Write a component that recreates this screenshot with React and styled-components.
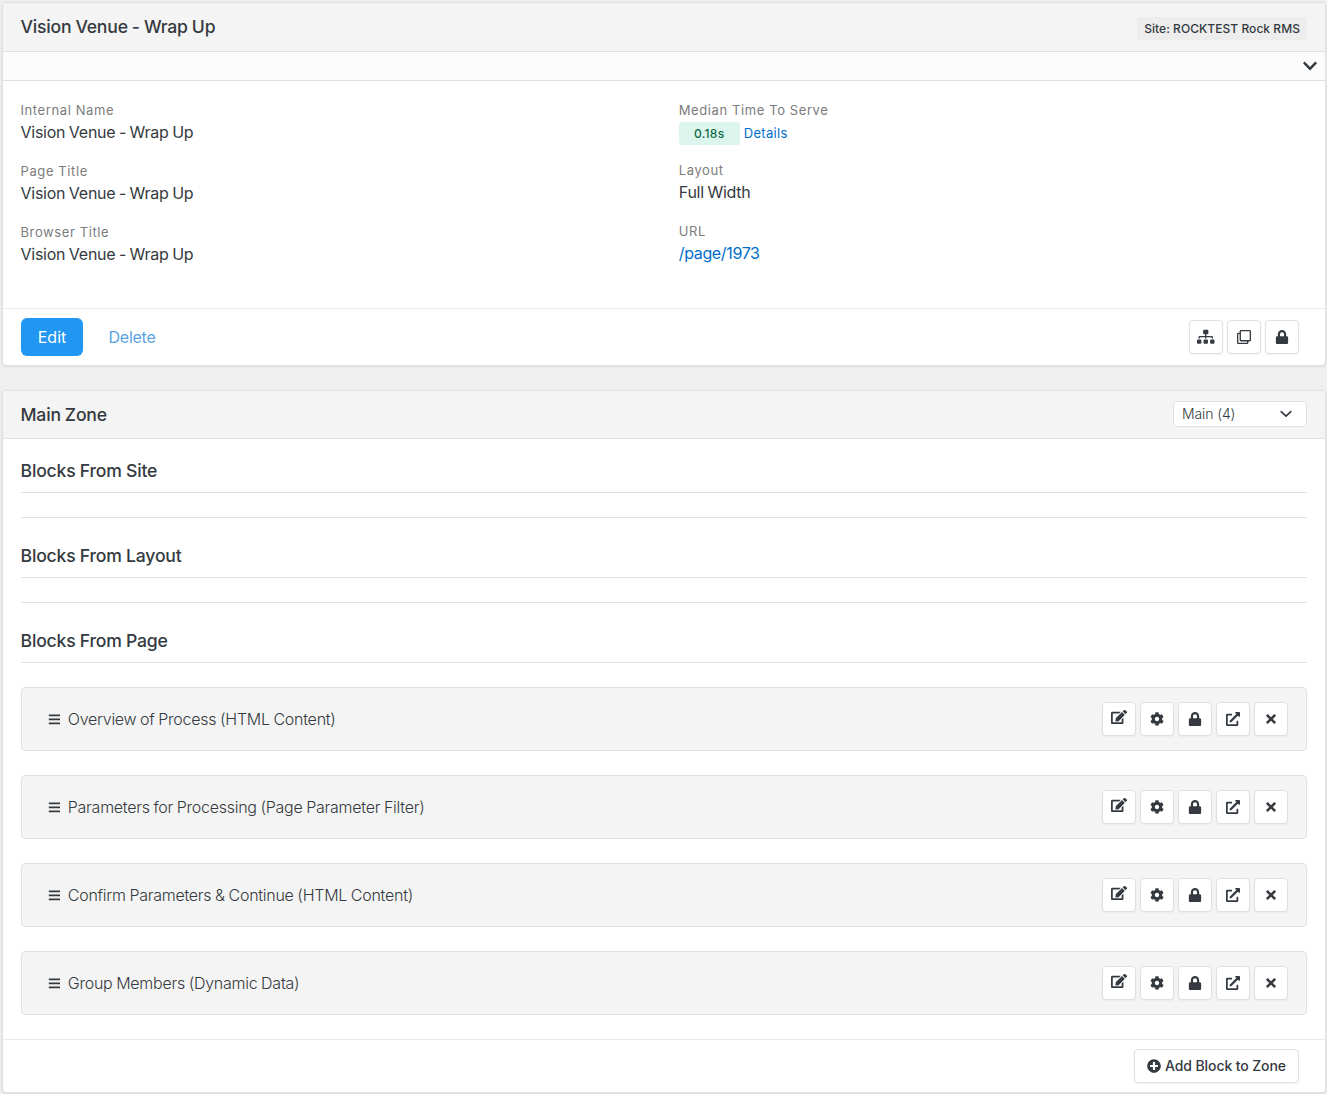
import React from "react";
import styled, { createGlobalStyle } from "styled-components";
import {
  FaSitemap, FaRegClone, FaLock, FaEdit, FaCog, FaExternalLinkAlt,
  FaTimes, FaPlusCircle, FaChevronDown, FaBars,
} from "react-icons/fa";

const GlobalStyle = createGlobalStyle`
  *, *::before, *::after { box-sizing: border-box; }
  html { background: #f0f0f0; }
  body {
    margin: 0;
    background: #f0f0f0;
    color: #343a40;
    font-family: Inter, "Liberation Sans", sans-serif;
    font-size: 16px;
    line-height: 24px;
  }
  svg { display: block; flex: none; }
`;

const Page = styled.main`
  display: flex;
  flex-direction: column;
  gap: 24px;
  padding: 2px 1px 1px 2px;
`;
const Panel = styled.section`
  display: flex;
  flex-direction: column;
  height: ${(p) => p.$height}px;
  background: #fff;
  border: 1px solid #dfe0e1;
  border-radius: 4px;
  box-shadow: 0 1px 3px rgba(0, 0, 0, 0.1);
  overflow: hidden;
`;
const PanelHeader = styled.header`
  display: flex;
  flex: none;
  align-items: center;
  justify-content: space-between;
  height: ${(p) => p.$height}px;
  padding: 0 18px 0 17.5px;
  background: #f4f4f4;
  border-bottom: 1px solid #dfe0e1;
`;
const Title = styled.h1`
  margin: 0;
  font-size: 17.6px;
  font-weight: 500;
  line-height: 24px;
  letter-spacing: -0.2px;
  word-spacing: -0.4px;
`;
const SiteLabel = styled.span`
  margin-top: 3px;
  padding: 0 7px;
  border-radius: 3px;
  background: #ededed;
  font-size: 12px;
  font-weight: 500;
  line-height: 23px;
  letter-spacing: 0.05px;
`;
const Drawer = styled.div`
  display: flex;
  flex: none;
  align-items: center;
  justify-content: flex-end;
  height: 29px;
  padding-right: 7px;
  background: #fcfcfc;
  border-bottom: 1px solid #dfe0e1;
`;
const Details = styled.div`
  display: grid;
  flex: 1;
  grid-template-columns: 1fr 1fr;
  column-gap: 30px;
  padding: 20px 18px 0 17.5px;
`;
const Column = styled.dl`
  display: flex;
  flex-direction: column;
  gap: 18px;
  margin: 0;
`;
const Term = styled.dt`
  color: #7c7c7c;
  font-size: 13px;
  line-height: 19px;
  letter-spacing: 0.6px;
`;
const Value = styled.dd`
  display: flex;
  gap: 4px;
  height: ${(p) => p.$height || 24}px;
  margin: 0;
`;
const ValueText = styled.span`
  letter-spacing: -0.25px;
  word-spacing: -0.7px;
`;
const Link = styled.a`
  margin-top: ${(p) => (p.$small ? 1 : 0)}px;
  color: #006dcc;
  font-size: ${(p) => (p.$small ? 13 : 16)}px;
  letter-spacing: ${(p) => (p.$small ? 0.3 : -0.35)}px;
  text-decoration: none;
`;
const TimeBadge = styled.span`
  width: 61px;
  height: 23px;
  margin-top: 2px;
  border-radius: 3px;
  background: #dcf6ed;
  color: #0f6a49;
  font-size: 12px;
  font-weight: 500;
  line-height: 23px;
  letter-spacing: 0.25px;
  text-align: center;
`;
const PanelFooter = styled.footer`
  display: flex;
  flex: none;
  align-items: center;
  justify-content: ${(p) => (p.$end ? "flex-end" : "space-between")};
  height: ${(p) => p.$height}px;
  padding: 0 26px 0 18px;
  border-top: 1px solid #ebebeb;
`;
const ButtonGroup = styled.div`
  display: flex;
  align-items: center;
  gap: 4px;
`;
const TextButton = styled.button`
  width: ${(p) => (p.$primary ? 62 : 90)}px;
  height: 38px;
  padding: 0;
  border: 0;
  border-radius: 6px;
  background: ${(p) => (p.$primary ? "#2196f3" : "transparent")};
  color: ${(p) => (p.$primary ? "#fff" : "#5ba3df")};
  font: 400 16px/24px Inter, sans-serif;
  letter-spacing: ${(p) => (p.$primary ? 0 : -0.25)}px;
`;
const Button = styled.button`
  display: flex;
  align-items: center;
  justify-content: center;
  gap: 4px;
  width: ${(p) => p.$width || 34}px;
  height: 34px;
  padding: 0;
  border: 1px solid #dfe0e1;
  border-radius: 4px;
  background: #fff;
  box-shadow: 0 1px 2px rgba(0, 0, 0, 0.05);
  color: #343a40;
  font: 500 14px/20px Inter, sans-serif;
  letter-spacing: -0.1px;
  white-space: nowrap;
`;
const Select = styled.button`
  display: flex;
  align-items: center;
  justify-content: space-between;
  width: 134px;
  height: 26px;
  margin-bottom: 1px;
  padding: 0 13px 0 8px;
  border: 1px solid #dfe0e1;
  border-radius: 4px;
  background: #fff;
  color: #343a40;
  font: 300 14px/20px Inter, sans-serif;
  letter-spacing: -0.12px;
`;
const ZoneBody = styled.div`
  flex: 1;
  padding: 0 18px;
`;
const SectionTitle = styled.h2`
  height: 54px;
  margin: 0 0 24px;
  padding-top: 20px;
  border-bottom: 1px solid #dfe0e1;
  font-size: 17.6px;
  font-weight: 500;
  line-height: 24px;
  letter-spacing: -0.17px;
  word-spacing: -0.3px;
  text-indent: -0.5px;
`;
const Divider = styled.hr`
  height: 1px;
  margin: 0 0 6px;
  border: 0;
  background: #dfe0e1;
`;
const BlockList = styled.div`
  display: flex;
  flex-direction: column;
  gap: 24px;
`;
const Block = styled.article`
  display: flex;
  align-items: center;
  height: 64px;
  padding: 0 18px 0 25.5px;
  border: 1px solid #dfe0e1;
  border-radius: 4px;
  background: #f4f4f4;
`;
const BlockName = styled.span`
  flex: 1;
  margin-left: 7.5px;
  font-weight: 300;
  letter-spacing: -0.26px;
  word-spacing: -0.5px;
`;
const Raised = styled.span`
  padding-bottom: 5px;
`;

const BLOCKS = [
  "Overview of Process (HTML Content)",
  "Parameters for Processing (Page Parameter Filter)",
  "Confirm Parameters & Continue (HTML Content)",
  "Group Members (Dynamic Data)",
];

function SelectArrow() {
  return (
    <svg width="14" height="10" viewBox="0 0 14 10" fill="none" stroke="currentColor" strokeWidth="1.6" strokeLinecap="round" strokeLinejoin="round">
      <path d="M2.2 2.6 7 7.2l4.8-4.6" />
    </svg>
  );
}

function Field({ label, children, height }) {
  return (
    <div>
      <Term>{label}</Term>
      <Value $height={height}>{children}</Value>
    </div>
  );
}

function BlockRow({ name }) {
  return (
    <Block>
      <FaBars size={12.8} />
      <BlockName>{name}</BlockName>
      <ButtonGroup>
        <Button><Raised><FaEdit size={16} /></Raised></Button>
        <Button><FaCog size={14} /></Button>
        <Button><FaLock size={14} /></Button>
        <Button><FaExternalLinkAlt size={14} /></Button>
        <Button><FaTimes size={14} /></Button>
      </ButtonGroup>
    </Block>
  );
}

export default function App() {
  return (
    <>
      <GlobalStyle />
      <Page>
        <Panel $height={364}>
          <PanelHeader $height={49}>
            <Title>Vision Venue - Wrap Up</Title>
            <SiteLabel>Site: ROCKTEST Rock RMS</SiteLabel>
          </PanelHeader>
          <Drawer><FaChevronDown size={16} /></Drawer>
          <Details>
            <Column>
              <Field label="Internal Name"><ValueText>Vision Venue - Wrap Up</ValueText></Field>
              <Field label="Page Title"><ValueText>Vision Venue - Wrap Up</ValueText></Field>
              <Field label="Browser Title"><ValueText>Vision Venue - Wrap Up</ValueText></Field>
            </Column>
            <Column>
              <Field label="Median Time To Serve" height={23}>
                <TimeBadge>0.18s</TimeBadge>
                <Link $small>Details</Link>
              </Field>
              <Field label="Layout"><ValueText>Full Width</ValueText></Field>
              <Field label="URL"><Link>/page/1973</Link></Field>
            </Column>
          </Details>
          <PanelFooter $height={57}>
            <ButtonGroup>
              <TextButton $primary>Edit</TextButton>
              <TextButton>Delete</TextButton>
            </ButtonGroup>
            <ButtonGroup>
              <Button><FaSitemap size={17.5} /></Button>
              <Button><FaRegClone size={14} /></Button>
              <Button><FaLock size={14} /></Button>
            </ButtonGroup>
          </PanelFooter>
        </Panel>
        <Panel $height={703}>
          <PanelHeader $height={48}>
            <Title>Main Zone</Title>
            <Select>Main (4)<SelectArrow /></Select>
          </PanelHeader>
          <ZoneBody>
            <SectionTitle>Blocks From Site</SectionTitle>
            <Divider />
            <SectionTitle>Blocks From Layout</SectionTitle>
            <Divider />
            <SectionTitle>Blocks From Page</SectionTitle>
            <BlockList>
              {BLOCKS.map((name) => <BlockRow key={name} name={name} />)}
            </BlockList>
          </ZoneBody>
          <PanelFooter $height={53} $end>
            <Button $width={165}><FaPlusCircle size={14} />Add Block to Zone</Button>
          </PanelFooter>
        </Panel>
      </Page>
    </>
  );
}
